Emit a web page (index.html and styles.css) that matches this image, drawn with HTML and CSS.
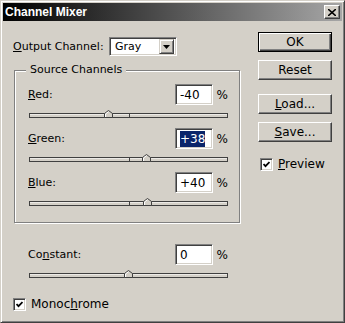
FILE: index.html
```html
<!DOCTYPE html>
<html lang="en">
<head>
  <meta charset="UTF-8">
  <meta name="viewport" content="width=device-width, initial-scale=1.0">
  <title>Channel Mixer</title>
  <link rel="stylesheet" href="styles.css">
</head>
<body>
  <div class="window">
    <!-- Title bar -->
    <div class="titlebar">
      <span class="title">Channel Mixer</span>
      <button class="close-btn" type="button">
        <svg width="8" height="7" viewBox="0 0 8 7"><path d="M0 0 L8 7 M8 0 L0 7" stroke="#000" stroke-width="1.6"/></svg>
      </button>
    </div>

    <div class="dialog">
      <!-- Left side: channels -->
      <div class="main">
        <div class="output-row">
          <span class="output-label"><u>O</u>utput Channel:</span>
          <div class="select">
            <span class="select-value">Gray</span>
            <span class="select-arrow">
              <svg width="7" height="4" viewBox="0 0 7 4"><path d="M0 0 H7 L3.5 4 Z" fill="#000"/></svg>
            </span>
          </div>
        </div>

        <div class="group">
          <span class="group-title">Source Channels</span>

          <div class="channel">
            <div class="channel-head">
              <span class="channel-label"><u>R</u>ed:</span>
              <span class="field">-40</span>
              <span class="unit">%</span>
            </div>
            <div class="slider">
              <span class="thumb" style="left: 40%"><svg width="9" height="8" viewBox="0 0 9 8"><path d="M0.5 7.5 V3.5 L4.5 0.5 L8.5 3.5 V7.5 Z" fill="#d4d0c8" stroke="#404040"/><path d="M1.5 7 V4 L4.5 1.7" fill="none" stroke="#fff"/></svg></span>
            </div>
          </div>

          <div class="channel">
            <div class="channel-head">
              <span class="channel-label"><u>G</u>reen:</span>
              <span class="field"><span class="selected">+38</span></span>
              <span class="unit">%</span>
            </div>
            <div class="slider">
              <span class="thumb" style="left: 59.5%"><svg width="9" height="8" viewBox="0 0 9 8"><path d="M0.5 7.5 V3.5 L4.5 0.5 L8.5 3.5 V7.5 Z" fill="#d4d0c8" stroke="#404040"/><path d="M1.5 7 V4 L4.5 1.7" fill="none" stroke="#fff"/></svg></span>
            </div>
          </div>

          <div class="channel">
            <div class="channel-head">
              <span class="channel-label"><u>B</u>lue:</span>
              <span class="field">+40</span>
              <span class="unit">%</span>
            </div>
            <div class="slider">
              <span class="thumb" style="left: 60%"><svg width="9" height="8" viewBox="0 0 9 8"><path d="M0.5 7.5 V3.5 L4.5 0.5 L8.5 3.5 V7.5 Z" fill="#d4d0c8" stroke="#404040"/><path d="M1.5 7 V4 L4.5 1.7" fill="none" stroke="#fff"/></svg></span>
            </div>
          </div>
        </div>

        <div class="channel constant">
          <div class="channel-head">
            <span class="channel-label">Co<u>n</u>stant:</span>
            <span class="field">0</span>
            <span class="unit">%</span>
          </div>
          <div class="slider">
            <span class="thumb" style="left: 50%"><svg width="9" height="8" viewBox="0 0 9 8"><path d="M0.5 7.5 V3.5 L4.5 0.5 L8.5 3.5 V7.5 Z" fill="#d4d0c8" stroke="#404040"/><path d="M1.5 7 V4 L4.5 1.7" fill="none" stroke="#fff"/></svg></span>
          </div>
        </div>

        <label class="check monochrome">
          <span class="check-box"><svg width="7" height="7" viewBox="0 0 7 7"><path d="M0.5 3 L2.5 5.2 L6.5 1" fill="none" stroke="#000" stroke-width="1.8"/></svg></span>
          <span>Monoc<u>h</u>rome</span>
        </label>
      </div>

      <!-- Right side: buttons -->
      <div class="side">
        <button class="btn btn-default" type="button">OK</button>
        <button class="btn btn-reset" type="button">Reset</button>
        <button class="btn btn-load" type="button"><u>L</u>oad...</button>
        <button class="btn btn-save" type="button"><u>S</u>ave...</button>
        <label class="check preview">
          <span class="check-box"><svg width="7" height="7" viewBox="0 0 7 7"><path d="M0.5 3 L2.5 5.2 L6.5 1" fill="none" stroke="#000" stroke-width="1.8"/></svg></span>
          <span><u>P</u>review</span>
        </label>
      </div>
    </div>
  </div>
</body>
</html>
```

FILE: styles.css
```css
:root {
  --face: #d4d0c8;
  --shadow: #808080;
  --dark: #404040;
  --light: #ffffff;
  --select-bg: #0a246a;
}

* {
  margin: 0;
  padding: 0;
  box-sizing: border-box;
}

body {
  font-family: 'DejaVu Sans', sans-serif;
  font-size: 11px;
  color: #000;
  background-color: var(--face);
}

u {
  text-decoration: underline;
  text-underline-offset: 1px;
}

/* Window frame */
.window {
  width: 345px;
  height: 323px;
  padding: 2px;
  background-color: var(--face);
  border: 1px solid;
  border-color: var(--face) var(--dark) var(--dark) var(--face);
  box-shadow: inset 1px 1px var(--light), inset -1px -1px var(--shadow);
}

/* Title bar */
.titlebar {
  height: 18px;
  display: flex;
  align-items: center;
  justify-content: space-between;
  padding: 0 2px;
  background-image: linear-gradient(to right, #000000, #a6a6a6);
}

.title {
  color: #fff;
  font-family: 'Liberation Sans', sans-serif;
  font-weight: bold;
  font-size: 12px;
}

.close-btn {
  width: 16px;
  height: 14px;
  display: flex;
  align-items: center;
  justify-content: center;
  background-color: var(--face);
  border: 1px solid;
  border-color: var(--light) var(--dark) var(--dark) var(--light);
  box-shadow: inset -1px -1px var(--shadow);
}

/* Dialog body */
.dialog {
  display: flex;
  padding-top: 11px;
}

.main {
  width: 238px;
  padding-left: 10px;
  padding-top: 5px;
}

.output-row {
  display: flex;
  align-items: center;
  height: 19px;
}

.output-label {
  width: 96px;
}

.select {
  width: 68px;
  height: 19px;
  display: flex;
  align-items: center;
  justify-content: space-between;
  background-color: #fff;
  border: 1px solid;
  border-color: var(--shadow) var(--light) var(--light) var(--shadow);
  box-shadow: inset 1px 1px var(--dark), inset -1px -1px var(--face);
  padding: 2px;
}

.select-value {
  padding-left: 3px;
}

.select-arrow {
  width: 15px;
  height: 15px;
  display: flex;
  align-items: center;
  justify-content: center;
  background-color: var(--face);
  border: 1px solid;
  border-color: var(--face) var(--dark) var(--dark) var(--face);
  box-shadow: inset 1px 1px var(--light), inset -1px -1px var(--shadow);
}

/* Group box */
.group {
  position: relative;
  width: 226px;
  margin: 14px 0 0 1px;
  padding: 13px 11px 16px 13px;
  border: 1px solid var(--shadow);
  box-shadow: inset 1px 1px var(--light), 1px 1px var(--light);
}

.group-title {
  position: absolute;
  top: -8px;
  left: 11px;
  padding: 0 4px;
  background-color: var(--face);
}

.channel + .channel {
  margin-top: 10px;
}

.channel-head {
  display: flex;
  align-items: center;
  height: 21px;
}

.channel-label {
  flex: 1;
}

.field {
  width: 38px;
  height: 21px;
  display: flex;
  align-items: center;
  padding-left: 4px;
  background-color: #fff;
  border: 1px solid;
  border-color: var(--shadow) var(--light) var(--light) var(--shadow);
  box-shadow: inset 1px 1px var(--dark), inset -1px -1px var(--face);
  font-size: 12px;
}

.selected {
  background-color: var(--select-bg);
  color: #fff;
  padding: 1px 0;
}

.unit {
  width: 15px;
  text-align: right;
  font-size: 12px;
}

/* Slider */
.slider {
  position: relative;
  height: 5px;
  margin: 8px 0 0 1px;
  background-color: var(--face);
  border: 1px solid var(--dark);
  box-shadow: inset 0 1px #eceae6;
}

.slider::after {
  content: "";
  position: absolute;
  left: 50%;
  top: 0;
  width: 1px;
  height: 3px;
  background-color: var(--dark);
}

.thumb {
  position: absolute;
  bottom: -1px;
  width: 9px;
  height: 8px;
  margin-left: -5px;
  display: block;
  z-index: 1;
}

.thumb svg {
  display: block;
}

/* Constant */
.constant {
  width: 200px;
  margin: 21px 0 0 15px;
}

/* Checkboxes */
.check {
  display: flex;
  align-items: center;
  gap: 5px;
}

.check-box {
  width: 13px;
  height: 13px;
  display: flex;
  align-items: center;
  justify-content: center;
  background-color: #fff;
  border: 1px solid;
  border-color: var(--shadow) var(--light) var(--light) var(--shadow);
  box-shadow: inset 1px 1px var(--dark), inset -1px -1px var(--face);
}

.monochrome {
  margin-top: 19px;
  font-size: 12px;
}

/* Buttons */
.side {
  display: flex;
  flex-direction: column;
  margin-left: 17px;
}

.btn {
  width: 74px;
  height: 20px;
  font-family: 'DejaVu Sans', sans-serif;
  font-size: 12px;
  color: #000;
  background-color: var(--face);
  border: 1px solid;
  border-color: var(--light) var(--dark) var(--dark) var(--light);
  box-shadow: inset -1px -1px var(--shadow);
}

.btn-default {
  border: 1px solid #000;
  box-shadow: inset 1px 1px var(--light), inset -1px -1px var(--dark), inset -2px -2px var(--shadow);
}

.btn-reset {
  margin-top: 8px;
}

.btn-load {
  margin-top: 14px;
}

.btn-save {
  margin-top: 8px;
}

.preview {
  margin: 15px 0 0 2px;
  font-size: 12px;
}
```
